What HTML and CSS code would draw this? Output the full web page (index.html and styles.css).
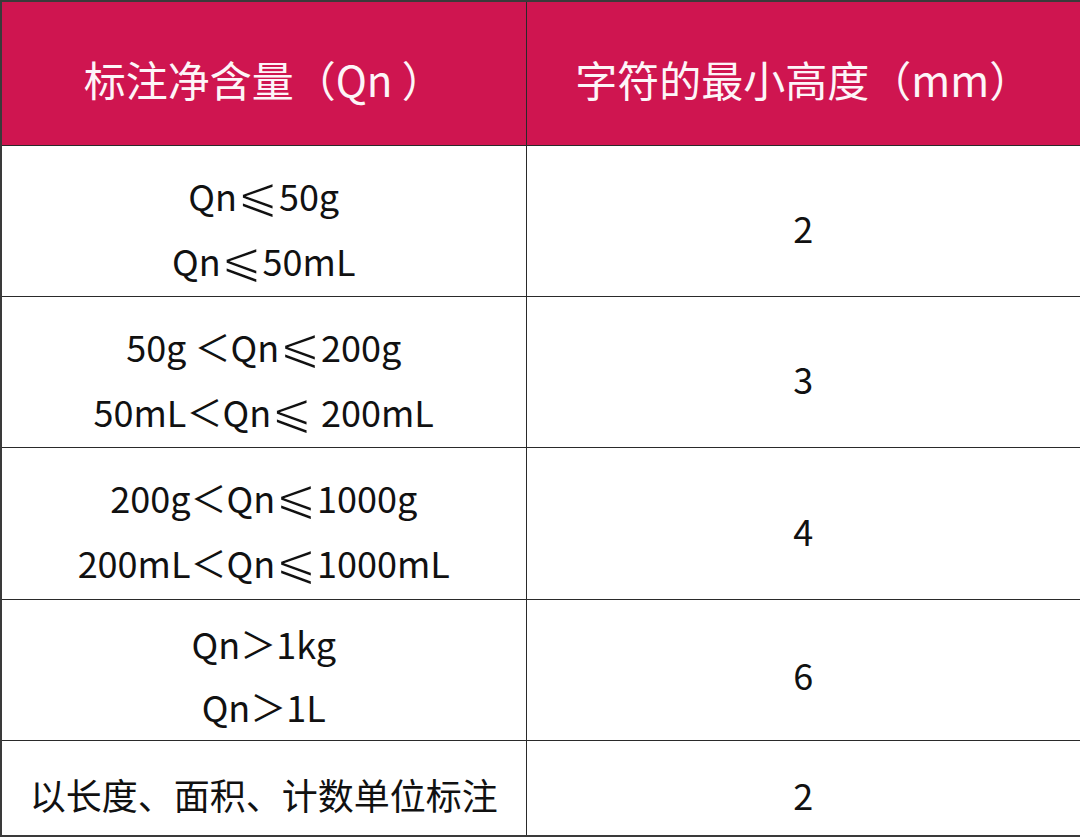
FILE: index.html
```
<!DOCTYPE html>
<html lang="zh-CN">
<head>
<meta charset="utf-8">
<title>净含量字符高度</title>
<link rel="stylesheet" href="styles.css">
</head>
<body>
<table class="spec">
  <colgroup>
    <col class="col-a">
    <col class="col-b">
  </colgroup>
  <thead>
    <tr class="head">
      <th>标注净含量（Qn ）</th>
      <th>字符的最小高度（mm）</th>
    </tr>
  </thead>
  <tbody>
    <tr class="r1">
      <td><div class="ln">Qn<span class="le">⩽</span>50g</div><div class="ln">Qn<span class="le">⩽</span>50mL</div></td>
      <td>2</td>
    </tr>
    <tr class="r2">
      <td><div class="ln">50g ＜Qn<span class="le">⩽</span>200g</div><div class="ln">50mL＜Qn<span class="le">⩽</span> 200mL</div></td>
      <td>3</td>
    </tr>
    <tr class="r3">
      <td><div class="ln">200g＜Qn<span class="le">⩽</span>1000g</div><div class="ln">200mL＜Qn<span class="le">⩽</span>1000mL</div></td>
      <td>4</td>
    </tr>
    <tr class="r4">
      <td><div class="ln">Qn＞1kg</div><div class="ln">Qn＞1L</div></td>
      <td>6</td>
    </tr>
    <tr class="r5">
      <td>以长度、面积、计数单位标注</td>
      <td>2</td>
    </tr>
  </tbody>
</table>
</body>
</html>
```
FILE: styles.css
```
html, body {
  margin: 0;
  padding: 0;
  background: #ffffff;
}
.spec {
  width: 1080px;
  border-collapse: collapse;
  table-layout: fixed;
  font-family: "Noto Sans CJK SC", "Noto Sans", sans-serif;
  color: #111111;
  border: 2px solid #3a3a3a;
}
.col-a { width: 525px; }
.col-b { width: 555px; }
.spec th,
.spec td {
  border: 1px solid #2a2a2a;
  text-align: center;
  vertical-align: middle;
  padding: 0;
  box-sizing: border-box;
}
.head th {
  background: #cf1550;
  color: #fdf5f8;
  font-weight: 400;
  font-size: 42px;
  height: 144px;
  padding-top: 10px;
}
.spec td {
  font-size: 36px;
  line-height: 65px;
  padding-top: 14px;
}
.le {
  font-family: "DejaVu Sans", sans-serif;
  font-size: 50px;
  line-height: 0;
  vertical-align: -1px;
  -webkit-text-stroke: 1.6px #ffffff;
}
.r1 td, .r2 td { height: 151px; }
.r3 td { height: 152px; }
.r4 td { height: 141px; padding-top: 10px; line-height: 63px; }
.r5 td { height: 96px; }
```
